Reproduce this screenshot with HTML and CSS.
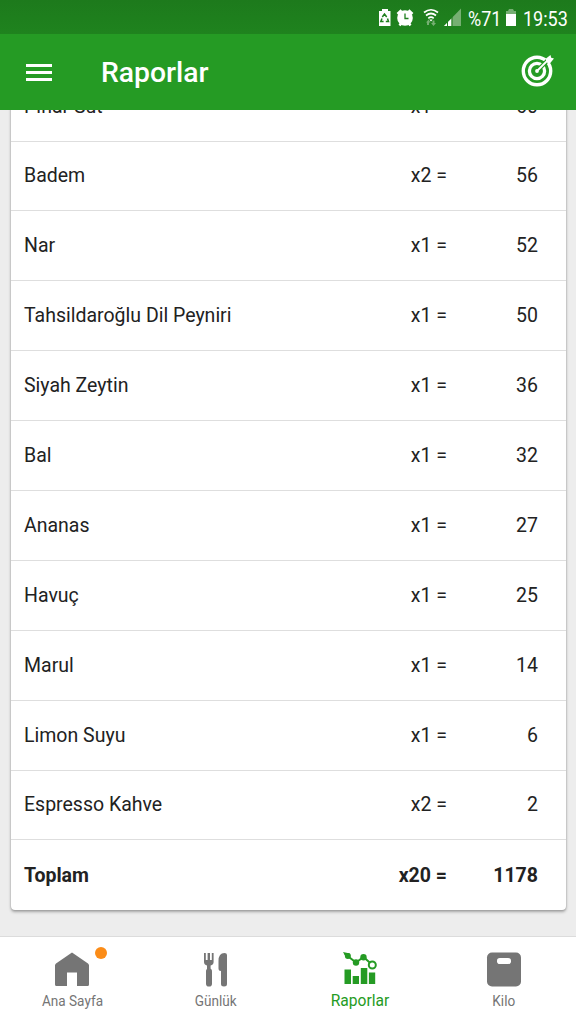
FILE: index.html
```html
<!DOCTYPE html>
<html lang="tr">
<head>
    <meta charset="UTF-8">
    <meta name="viewport" content="width=device-width, initial-scale=1.0">
    <title>Raporlar</title>
    <link rel="stylesheet" href="styles.css">
</head>
<body>
    <div class="status-bar">
        <svg class="status-icons" width="84" height="34" viewBox="0 0 84 34">
            <!-- pil tasarrufu -->
            <path fill="#fff" d="M4 9h6v2h2.500v15H1V11h3z"/>
            <path fill="none" stroke="#1f7f1d" stroke-width="1.5" d="M4.300 17l2.200-3 2.200 3M9.500 18.500l1 3H7.800M5.600 21.500H2.800l1.200-3"/>
            <!-- alarm -->
            <circle cx="27" cy="18" r="7.800" fill="#fff"/>
            <path stroke="#fff" stroke-width="2.6" fill="none" d="M19.500 14l4-3.800M34.500 14l-4-3.800M21.500 25.500l2-2.500M32.500 25.500l-2-2.500"/>
            <path stroke="#1f7f1d" stroke-width="1.300" fill="none" d="M27 13.500v5h3.500"/>
            <!-- wifi -->
            <g fill="none" stroke="#fff" stroke-width="1.700">
                <path d="M46 12.500q7-5.500 14 0M48 15.500q5-4 10 0M50.300 18.300q2.700-2.200 5.400 0"/>
            </g>
            <path fill="#fff" d="M51.300 19.500h3.400L53 21.500z"/>
            <path fill="#76af72" d="M48 22.500l2.500-3 2 3h-1.500V25h-2v-2.500zM53 23h1.500v-2.500h2V23h1.500l-2.500 3z"/>
            <!-- sinyal -->
            <path fill="#76af72" d="M83 8.500V26H66z"/>
            <path fill="#fff" d="M73.500 18.500V26H66z"/>
            <path stroke="#1f7f1d" stroke-width="1" d="M69.500 17v9M74 14v12"/>
        </svg>
        <span class="status-text percent">%71</span>
        <svg class="battery" width="12" height="34" viewBox="0 0 12 34">
            <path fill="#76af72" d="M4 9h4l1 2h2v4H1v-4h2z"/>
            <path fill="#fff" d="M1 14h10v12H1z"/>
        </svg>
        <span class="status-text clock">19:53</span>
    </div>

    <header class="toolbar">
        <svg class="menu-icon" width="26" height="18" viewBox="0 0 26 18">
            <path fill="#fff" d="M0 0h26v3H0zM0 7h26v3H0zM0 14h26v3H0z"/>
        </svg>
        <h1>Raporlar</h1>
        <svg class="target-icon" width="34" height="34" viewBox="0 0 34 34">
            <circle cx="16" cy="18" r="13.700" fill="none" stroke="#fff" stroke-width="3.400"/>
            <circle cx="16" cy="18" r="7.600" fill="none" stroke="#fff" stroke-width="3.300"/>
            <path stroke="#259b24" stroke-width="4" d="M18 16L29 5"/>
            <path stroke="#fff" stroke-width="1.800" d="M16 18L28 6"/>
            <circle cx="16" cy="18" r="1.900" fill="#fff"/>
            <path fill="#fff" d="M25 7.500V5.500L29.500 2l.7 2.800 2.800.700-3.700 4.500h-2.800z"/>
        </svg>
    </header>

    <main class="content">
        <div class="card">
            <div class="row"><span class="name">Pınar Süt</span><span class="count">x1 =</span><span class="value">60</span></div>
            <div class="row"><span class="name">Badem</span><span class="count">x2 =</span><span class="value">56</span></div>
            <div class="row"><span class="name">Nar</span><span class="count">x1 =</span><span class="value">52</span></div>
            <div class="row"><span class="name">Tahsildaroğlu Dil Peyniri</span><span class="count">x1 =</span><span class="value">50</span></div>
            <div class="row"><span class="name">Siyah Zeytin</span><span class="count">x1 =</span><span class="value">36</span></div>
            <div class="row"><span class="name">Bal</span><span class="count">x1 =</span><span class="value">32</span></div>
            <div class="row"><span class="name">Ananas</span><span class="count">x1 =</span><span class="value">27</span></div>
            <div class="row"><span class="name">Havuç</span><span class="count">x1 =</span><span class="value">25</span></div>
            <div class="row"><span class="name">Marul</span><span class="count">x1 =</span><span class="value">14</span></div>
            <div class="row"><span class="name">Limon Suyu</span><span class="count">x1 =</span><span class="value">6</span></div>
            <div class="row"><span class="name">Espresso Kahve</span><span class="count">x2 =</span><span class="value">2</span></div>
            <div class="row total"><span class="name">Toplam</span><span class="count">x20 =</span><span class="value">1178</span></div>
        </div>
    </main>

    <nav class="tabs">
        <a class="tab">
            <svg width="36" height="36" viewBox="0 0 36 36">
                <path fill="currentColor" d="M18 .5L34 11.500q1 .8 1 2v19q0 1.500-1.500 1.500H23V20.500H13V34H2.500Q1 34 1 32.500v-19q0-1.200 1-2z"/>
            </svg>
            <span>Ana Sayfa</span>
            <i class="badge"></i>
        </a>
        <a class="tab">
            <svg width="36" height="36" viewBox="0 0 36 36">
                <path fill="currentColor" d="M6 1h1.800v7h1.800V1h2.400v7h1.800V1h1.800v9q0 2.500-3 3.500v4H9v-4q-3-1-3-3.500z"/>
                <rect x="8" y="16.500" width="6" height="18" rx="2.800" fill="currentColor"/>
                <path fill="currentColor" d="M29 3v29q0 2.500-3 2.500T23 32V19q-2.500 0-2.500-2.500V9q0-8 6-8Q29 1 29 3z"/>
            </svg>
            <span>Günlük</span>
        </a>
        <a class="tab active">
            <svg width="36" height="36" viewBox="0 0 36 36">
                <path fill="currentColor" d="M2.500 17.500H9V32H2.500zM10.700 24H17v8h-6.300zM18.800 16h6.500v16h-6.500zM26.900 20.500h6.300V32h-6.300z"/>
                <path fill="none" stroke="currentColor" stroke-width="2" d="M3 2L14 10.500 21.500 5l9 8"/>
                <path fill="currentColor" d="M1 0l7 1.500-4 4z"/>
                <circle cx="5.900" cy="4" r="3" fill="currentColor"/>
                <circle cx="14" cy="10.500" r="3.200" fill="currentColor"/>
                <circle cx="21.500" cy="5.200" r="3.200" fill="currentColor"/>
                <circle cx="30.300" cy="13" r="3.500" fill="#fff" stroke="currentColor" stroke-width="2"/>
            </svg>
            <span>Raporlar</span>
        </a>
        <a class="tab">
            <svg width="36" height="36" viewBox="0 0 36 36">
                <rect x="1" y=".5" width="34" height="34" rx="5" fill="currentColor"/>
                <rect x="11" y="6" width="14" height="6" rx="2.800" fill="#fff"/>
            </svg>
            <span>Kilo</span>
        </a>
    </nav>
</body>
</html>
```
FILE: styles.css
```css
* {
    box-sizing: border-box;
}
body {
    margin: 0;
    height: 1024px;
    display: flex;
    flex-direction: column;
    overflow: hidden;
    font-family: Roboto, sans-serif;
    color: #222;
    background-color: #ededed;
}
.status-bar {
    flex: none;
    height: 34px;
    display: flex;
    align-items: center;
    padding-left: 378px;
    background: linear-gradient(#1d7a1c, #1f831e);
    color: #fff;
}
.status-icons {
    flex: none;
    margin-right: 6px;
}
.status-text {
    font-size: 20px;
    line-height: 34px;
    padding-top: 3px;
    transform: scaleX(0.9);
    transform-origin: left;
}
.percent {
    width: 37px;
}
.battery {
    flex: none;
    margin-right: 6px;
}
.toolbar {
    flex: none;
    height: 76px;
    display: flex;
    align-items: center;
    padding: 0 21px 0 26px;
    background-color: #259b24;
    color: #fff;
}
.menu-icon {
    margin-top: 1px;
}
.toolbar h1 {
    margin: 0 0 0 49px;
    flex: 1;
    font-size: 28.3px;
    font-weight: 500;
}
.target-icon {
    margin-bottom: 4px;
}
.content {
    flex: 1;
    min-height: 0;
    padding: 0 10px 26px 11px;
    overflow: hidden;
    display: flex;
    flex-direction: column;
    justify-content: flex-end;
}
.card {
    background-color: #fff;
    border-radius: 4px;
    box-shadow: 0 2px 3px rgba(0, 0, 0, 0.3), 0 0 2px rgba(0, 0, 0, 0.22);
}
.row {
    height: 69.9px;
    display: flex;
    align-items: center;
    padding: 0 28px 0 13px;
    font-size: 19.5px;
    border-bottom: 1px solid #dedede;
}
.row:last-child {
    height: 69.6px;
    border-bottom: none;
}
.name {
    flex: 1;
}
.count,
.value {
    width: 91px;
    text-align: right;
}
.total {
    font-weight: bold;
}
.tabs {
    flex: none;
    height: 88px;
    display: flex;
    background-color: #fff;
    border-top: 1px solid #dcdcdc;
}
.tab {
    flex: 1;
    position: relative;
    display: flex;
    flex-direction: column;
    align-items: center;
    padding-top: 15px;
    font-size: 14px;
    line-height: 18px;
    color: #757575;
}
.tab span {
    margin-top: 4px;
    transform: scaleX(0.97);
}
.tab.active {
    font-size: 15.6px;
    color: #259b24;
}
.tab.active span {
    transform: none;
}
.badge {
    position: absolute;
    top: 10px;
    left: 95px;
    width: 12px;
    height: 12px;
    border-radius: 50%;
    background-color: #fb8c18;
}
```
